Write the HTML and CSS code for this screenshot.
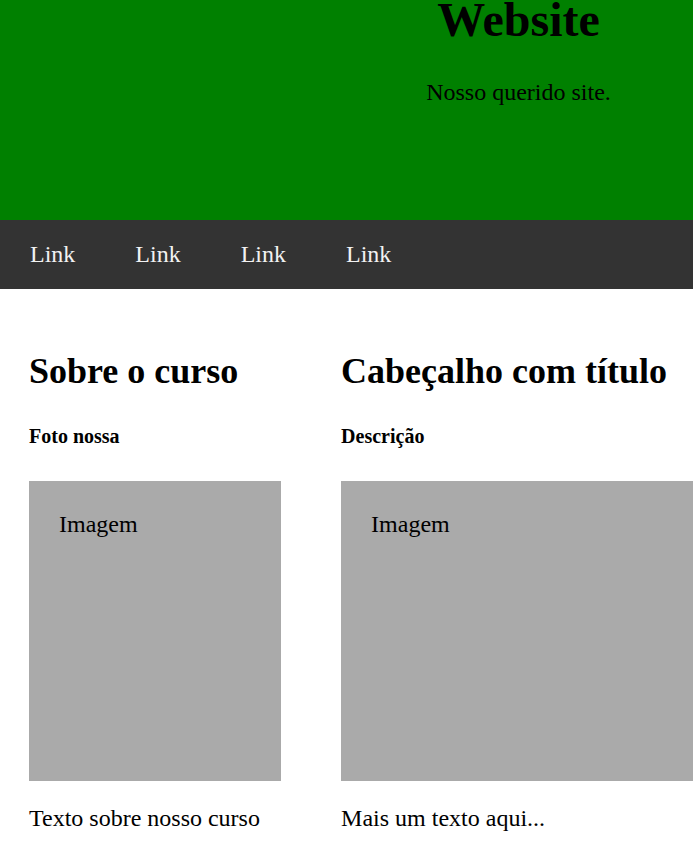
FILE: index.html
```html
<!DOCTYPE html>
<html lang="pt">
<head>
<meta charset="utf-8">
<title>Website</title>
<link rel="stylesheet" href="styles.css">
</head>
<body>
<div class="page">
  <header class="header">
    <h1 class="header-title">Website</h1>
    <p class="header-sub">Nosso querido site.</p>
  </header>
  <nav class="topnav">
    <a class="topnav-link" href="#">Link</a>
    <a class="topnav-link" href="#">Link</a>
    <a class="topnav-link" href="#">Link</a>
    <a class="topnav-link" href="#">Link</a>
  </nav>
  <main class="row">
    <section class="col col-left">
      <h2 class="col-title">Sobre o curso</h2>
      <h5 class="col-sub">Foto nossa</h5>
      <div class="fakeimg">Imagem</div>
      <p class="col-text">Texto sobre nosso curso</p>
    </section>
    <section class="col col-right">
      <h2 class="col-title">Cabeçalho com título</h2>
      <h5 class="col-sub">Descrição</h5>
      <div class="fakeimg">Imagem</div>
      <p class="col-text">Mais um texto aqui...</p>
    </section>
  </main>
</div>
</body>
</html>
```

FILE: styles.css
```css
html, body {
  margin: 0;
  padding: 0;
}
body {
  overflow-x: hidden;
  font-family: "Liberation Serif", "Times New Roman", serif;
  font-size: 24px;
  color: #000;
  background: #fff;
}
.page {
  width: 1037px;
}
.header {
  display: flow-root;
  background: #008000;
  height: 220px;
  box-sizing: border-box;
  text-align: center;
  padding: 0;
}
.header-title {
  font-size: 48px;
  font-weight: bold;
  margin: -8px 0 32px;
}
.header-sub {
  margin: 0;
}
.topnav {
  background: #333;
  display: flex;
}
.topnav-link {
  color: #f2f2f2;
  text-decoration: none;
  padding: 21px 30px;
  display: block;
}
.row {
  display: flex;
}
.col {
  padding: 31px 30px 30px;
  box-sizing: border-box;
}
.col-left {
  width: 30%;
  padding-left: 29px;
}
.col-right {
  width: 70%;
}
.col-title {
  font-size: 36px;
  margin: 30px 0;
}
.col-sub {
  font-size: 20px;
  margin: 33px 0;
}
.fakeimg {
  background: #aaa;
  height: 300px;
  padding: 30px;
  box-sizing: border-box;
}
.col-text {
  margin: 24px 0;
}
```
